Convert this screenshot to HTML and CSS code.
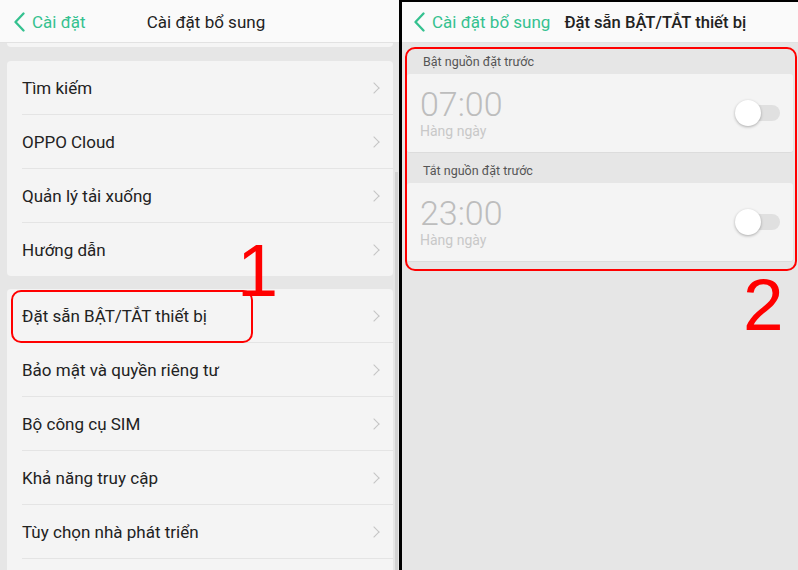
FILE: index.html
```html
<!DOCTYPE html>
<html lang="vi">
<head>
<meta charset="utf-8">
<link rel="stylesheet" href="styles.css">
</head>
<body>
<div class="screen">
  <section class="panel left">
    <header class="topbar centered">
      <div class="back">
        <svg class="chev" viewBox="0 0 12 20" width="12" height="20"><path d="M10.5 1.5 L2.5 10 L10.5 18.5" /></svg>
        <span>Cài đặt</span>
      </div>
      <div class="title">Cài đặt bổ sung</div>
      <div></div>
    </header>
    <div class="content">
      <div class="peek"></div>
      <div class="card">
        <div class="row"><span>Tìm kiếm</span><i class="arrow"></i></div>
        <div class="row"><span>OPPO Cloud</span><i class="arrow"></i></div>
        <div class="row"><span>Quản lý tải xuống</span><i class="arrow"></i></div>
        <div class="row"><span>Hướng dẫn</span><i class="arrow"></i></div>
      </div>
      <div class="card">
        <div class="row"><span>Đặt sẵn BẬT/TẮT thiết bị</span><i class="arrow"></i></div>
        <div class="row"><span>Bảo mật và quyền riêng tư</span><i class="arrow"></i></div>
        <div class="row"><span>Bộ công cụ SIM</span><i class="arrow"></i></div>
        <div class="row"><span>Khả năng truy cập</span><i class="arrow"></i></div>
        <div class="row"><span>Tùy chọn nhà phát triển</span><i class="arrow"></i></div>
        <div class="row"><span></span></div>
      </div>
    </div>
    <div class="scrollbar"></div>
    <div class="mark box1"></div>
    <div class="num n1">1</div>
  </section>
  <div class="divider"></div>
  <section class="panel right">
    <header class="topbar">
      <div class="back">
        <svg class="chev" viewBox="0 0 12 20" width="12" height="20"><path d="M10.5 1.5 L2.5 10 L10.5 18.5" /></svg>
        <span>Cài đặt bổ sung</span>
      </div>
      <div class="title strong">Đặt sẵn BẬT/TẮT thiết bị</div>
    </header>
    <div class="content">
      <div class="label">Bật nguồn đặt trước</div>
      <div class="tcard">
        <div class="times">
          <div class="time">07:00</div>
          <div class="repeat">Hàng ngày</div>
        </div>
        <div class="toggle"><span class="knob"></span></div>
      </div>
      <div class="label">Tắt nguồn đặt trước</div>
      <div class="tcard">
        <div class="times">
          <div class="time">23:00</div>
          <div class="repeat">Hàng ngày</div>
        </div>
        <div class="toggle"><span class="knob"></span></div>
      </div>
    </div>
    <div class="mark box2"></div>
    <div class="num n2">2</div>
  </section>
</div>
</body>
</html>
```

FILE: styles.css
```css
* { box-sizing: border-box; }
html, body { margin: 0; padding: 0; }
body {
  width: 798px;
  height: 570px;
  overflow: hidden;
  font-family: Roboto, "Noto Sans", "Liberation Sans", sans-serif;
  background: #e6e6e6;
}
.screen {
  display: flex;
  width: 798px;
  height: 570px;
}
.panel {
  position: relative;
  height: 570px;
  overflow: hidden;
  background: #e6e6e6;
  display: flex;
  flex-direction: column;
}
.left { width: 399px; }
.divider { width: 3px; background: #000; }
.right { width: 396px; border-top: 2px solid #000; }

.topbar {
  height: 43px;
  flex: none;
  background: #fafafa;
  border-bottom: 1px solid #e2e2e2;
  display: flex;
  align-items: center;
  padding-left: 13px;
  padding-top: 1px;
}
.right .topbar { height: 41px; padding-left: 11px; padding-top: 0; }
.topbar.centered {
  display: grid;
  grid-template-columns: 1fr auto 1fr;
}
.back {
  display: flex;
  align-items: center;
  gap: 7px;
  color: #34c18f;
  font-size: 17px;
}
.chev path {
  fill: none;
  stroke: #34c18f;
  stroke-width: 2.3;
  stroke-linecap: round;
  stroke-linejoin: round;
}
.title {
  font-size: 17px;
  color: #222;
}
.title.strong { font-weight: 500; font-size: 16.6px; margin-left: 14px; }

.left .content {
  padding: 0 6px 0 7px;
  display: flex;
  flex-direction: column;
}
.peek {
  height: 4px;
  background: #f5f5f5;
  border-radius: 0 0 4px 4px;
  margin-bottom: 14px;
}
.card {
  background: #f4f4f4;
  border-radius: 4px;
  margin-bottom: 13px;
  flex: none;
}
.row {
  height: 54px;
  display: flex;
  align-items: center;
  justify-content: space-between;
  margin-left: 15px;
  padding-right: 12px;
  border-top: 1px solid #e4e4e4;
  font-size: 17px;
  color: #222;
}
.row:first-child { border-top: none; height: 53px; }
.arrow {
  width: 8px;
  height: 8px;
  border-top: 1.3px solid #c4c4c4;
  border-right: 1.3px solid #c4c4c4;
  transform: rotate(45deg);
  margin-right: 3px;
}
.scrollbar {
  position: absolute;
  left: 395px;
  top: 172px;
  width: 3px;
  height: 400px;
  background: #d2d2d2;
}

.right .content {
  padding: 0 5px;
  display: flex;
  flex-direction: column;
}
.label {
  height: 31px;
  display: flex;
  align-items: flex-end;
  padding: 0 0 5px 16px;
  font-size: 12.5px;
  color: #555;
}
.label + .tcard + .label { height: 30px; }
.tcard {
  height: 79px;
  background: #f4f4f4;
  border-radius: 3px;
  border-bottom: 1px solid #dcdcdc;
  display: flex;
  align-items: center;
  justify-content: space-between;
  padding: 0 13px 0 13px;
}
.time {
  font-size: 34px;
  font-weight: 300;
  color: #bdbdbd;
  line-height: 36px;
}
.repeat {
  font-size: 14px;
  color: #c8c8c8;
  line-height: 16px;
  margin-top: 1px;
}
.times { margin-top: -2px; }
.toggle {
  position: relative;
  width: 45px;
  height: 26px;
}
.toggle::before {
  content: "";
  position: absolute;
  left: 10px;
  top: 5px;
  width: 35px;
  height: 16px;
  border-radius: 8px;
  background: #e0e0e0;
}
.knob {
  position: absolute;
  left: 0;
  top: 0;
  width: 26px;
  height: 26px;
  border-radius: 50%;
  background: #fff;
  box-shadow: 0 1px 3px rgba(0,0,0,0.3);
}

.mark {
  position: absolute;
  border: 2px solid #ff0000;
  border-radius: 10px;
}
.box1 { left: 11px; top: 290px; width: 242px; height: 53px; }
.box2 { left: 3px; top: 45px; width: 392px; height: 224px; }
.num {
  position: absolute;
  font-family: "Liberation Sans", Arial, sans-serif;
  color: #ff0000;
  line-height: 1;
}
.n1 { font-size: 74px; left: 237px; top: 234px; }
.n2 { font-size: 73px; left: 341px; top: 266px; }
```
